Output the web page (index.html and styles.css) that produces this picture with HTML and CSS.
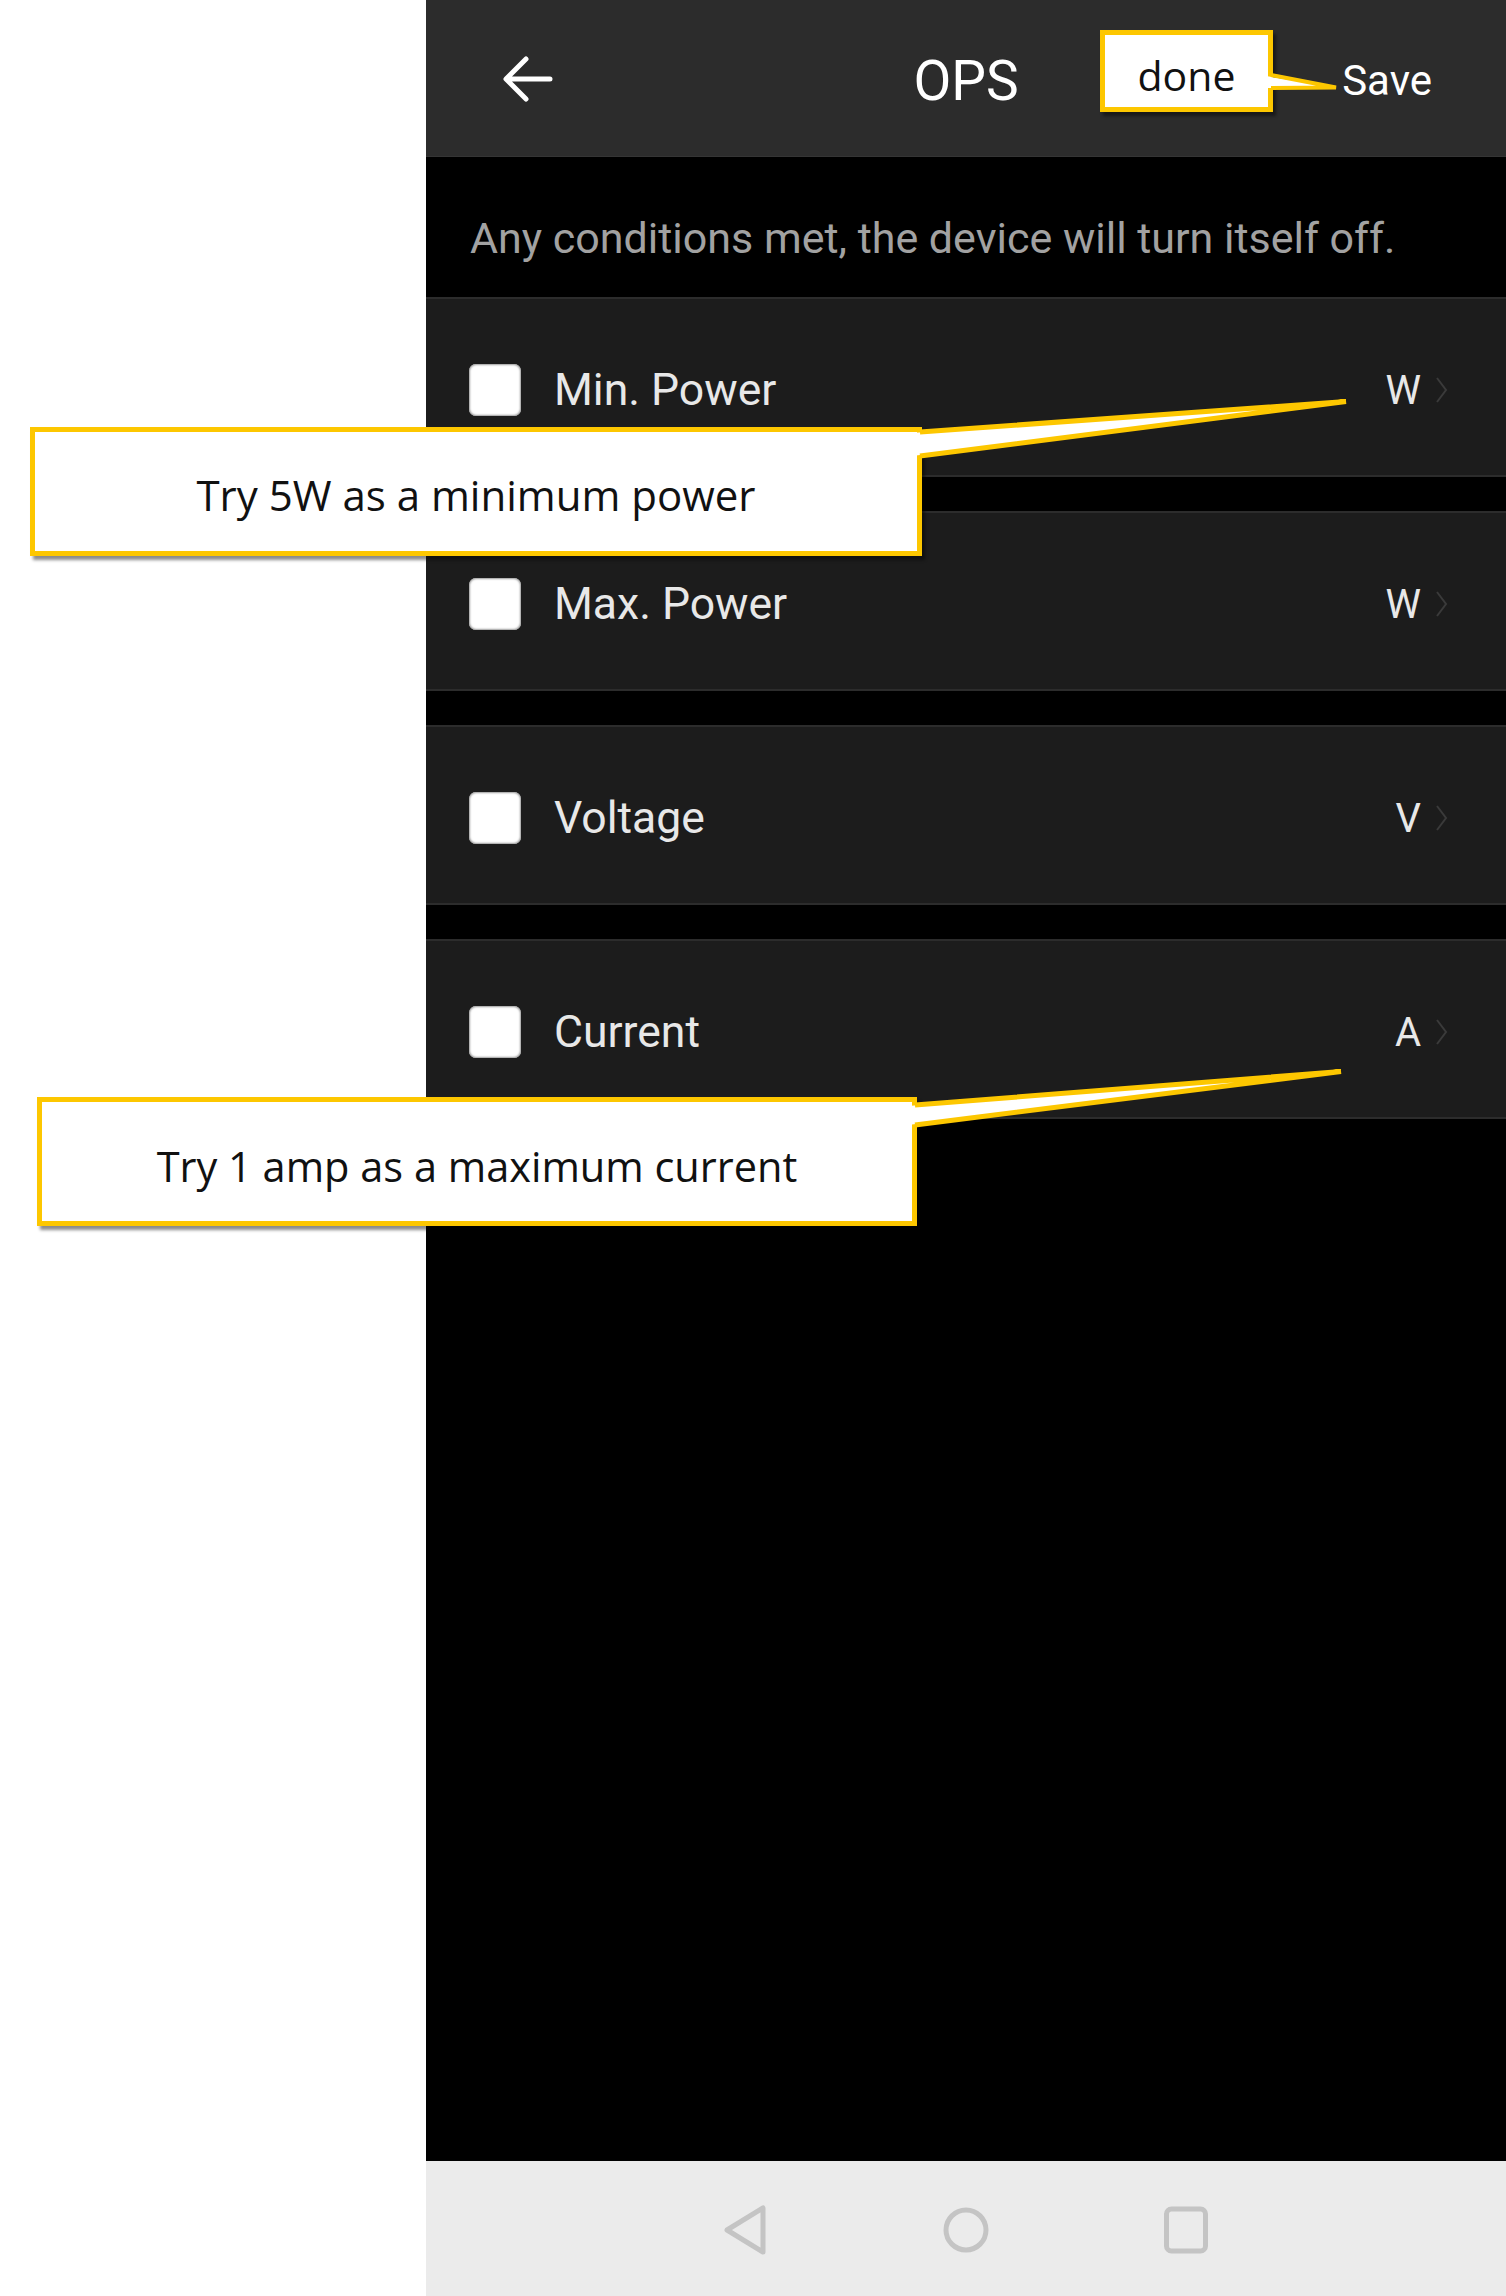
FILE: index.html
```html
<!DOCTYPE html>
<html>
<head>
<meta charset="utf-8">
<title>OPS</title>
<link rel="stylesheet" href="styles.css">
</head>
<body>
<div class="page">
  <div class="blank"></div>
  <div class="phone">
    <header class="appbar">
      <div class="back">
        <svg width="52" height="48" viewBox="0 0 52 48"><path d="M49 24 H6 M25 4 L5 24 L25 44" fill="none" stroke="#fff" stroke-width="5" stroke-linecap="round" stroke-linejoin="round"/></svg>
      </div>
      <div class="title">OPS</div>
      <div class="save">Save</div>
    </header>
    <div class="desc">Any conditions met, the device will turn itself off.</div>
    <div class="list">
      <div class="row">
        <span class="check"></span>
        <span class="label">Min. Power</span>
        <span class="unit">W</span>
        <svg class="chev" width="14" height="28" viewBox="0 0 14 28"><path d="M2 2 L11 14 L2 26" fill="none" stroke="#3a3a3a" stroke-width="2"/></svg>
      </div>
      <div class="row">
        <span class="check"></span>
        <span class="label">Max. Power</span>
        <span class="unit">W</span>
        <svg class="chev" width="14" height="28" viewBox="0 0 14 28"><path d="M2 2 L11 14 L2 26" fill="none" stroke="#3a3a3a" stroke-width="2"/></svg>
      </div>
      <div class="row">
        <span class="check"></span>
        <span class="label">Voltage</span>
        <span class="unit">V</span>
        <svg class="chev" width="14" height="28" viewBox="0 0 14 28"><path d="M2 2 L11 14 L2 26" fill="none" stroke="#3a3a3a" stroke-width="2"/></svg>
      </div>
      <div class="row">
        <span class="check"></span>
        <span class="label">Current</span>
        <span class="unit">A</span>
        <svg class="chev" width="14" height="28" viewBox="0 0 14 28"><path d="M2 2 L11 14 L2 26" fill="none" stroke="#3a3a3a" stroke-width="2"/></svg>
      </div>
    </div>
    <div class="filler"></div>
    <nav class="navbar">
      <svg width="46" height="50" viewBox="0 0 46 50"><path d="M40 3 L40 47 L4 25 Z" fill="none" stroke="#c4c4c4" stroke-width="5" stroke-linejoin="round"/></svg>
      <svg width="50" height="50" viewBox="0 0 50 50"><circle cx="25" cy="25" r="20" fill="none" stroke="#c4c4c4" stroke-width="5"/></svg>
      <svg width="46" height="50" viewBox="0 0 46 50"><rect x="3.5" y="4" width="39" height="42" rx="5" fill="none" stroke="#c4c4c4" stroke-width="5"/></svg>
    </nav>
  </div>
</div>

<div class="callout c-done">done</div>
<div class="callout c-min">Try 5W as a minimum power</div>
<div class="callout c-cur">Try 1 amp as a maximum current</div>

<svg class="pointers" width="1506" height="2296" viewBox="0 0 1506 2296">
  <polygon points="1266,76 1335,87 1266,88" fill="#fff"/>
  <polyline points="1271,75 1336,87.5 1271,88" fill="none" stroke="#fdc700" stroke-width="4"/>
  <polygon points="912,433 1344,401.5 912,456" fill="#fff"/>
  <polyline points="920,432 1346,401.5 920,456" fill="none" stroke="#fdc700" stroke-width="5"/>
  <polygon points="908,1106 1339,1071.5 908,1125" fill="#fff"/>
  <polyline points="915,1105 1341,1071.5 915,1125" fill="none" stroke="#fdc700" stroke-width="5"/>
</svg>
</body>
</html>
```

FILE: styles.css
```css
html, body {
  margin: 0;
  padding: 0;
}
body {
  width: 1506px;
  height: 2296px;
  overflow: hidden;
  background: #ffffff;
  position: relative;
  font-family: Roboto, "Liberation Sans", sans-serif;
}
.page {
  display: flex;
  height: 2296px;
}
.blank {
  width: 426px;
  flex: none;
  background: #ffffff;
}
.phone {
  width: 1080px;
  display: flex;
  flex-direction: column;
  background: #000;
}
.appbar {
  height: 157px;
  flex: none;
  background: #2c2c2c;
  display: grid;
  grid-template-columns: 1fr auto 1fr;
  align-items: center;
  box-sizing: border-box;
  border-bottom: 1px solid #353535;
}
.back {
  padding-left: 75px;
  display: flex;
  align-items: center;
  padding-top: 2px;
}
.title {
  color: #ffffff;
  font-size: 55px;
  padding-top: 6px;
}
.save {
  justify-self: end;
  padding-right: 74px;
  color: #ffffff;
  font-size: 42px;
  padding-top: 4px;
}
.desc {
  height: 140px;
  flex: none;
  box-sizing: border-box;
  padding: 57px 0 0 44px;
  color: #a2a2a2;
  font-size: 43px;
  line-height: 48px;
}
.list {
  display: flex;
  flex-direction: column;
  gap: 34px;
  flex: none;
}
.row {
  height: 180px;
  box-sizing: border-box;
  background: #1c1c1c;
  border-top: 2px solid #2c2c2c;
  border-bottom: 2px solid #2c2c2c;
  display: flex;
  align-items: center;
  padding: 6px 57px 0 43px;
}
.check {
  width: 52px;
  height: 52px;
  border-radius: 7px;
  background: #ffffff;
  box-shadow: inset 0 0 2px 1px #9a9a9a;
  flex: none;
}
.label {
  margin-left: 33px;
  color: #e8e8e8;
  font-size: 44.5px;
}
.unit {
  margin-left: auto;
  color: #e8e8e8;
  font-size: 40px;
}
.chev {
  margin-left: 14px;
  flex: none;
}
.filler {
  flex: 1;
  background: #000;
}
.navbar {
  height: 135px;
  flex: none;
  background: #ebebeb;
  display: flex;
  align-items: center;
  justify-content: center;
  gap: 172px;
  padding-top: 2px;
  box-sizing: border-box;
}
.navbar svg {
  display: block;
}
.callout {
  position: absolute;
  box-sizing: border-box;
  background: #ffffff;
  border: 5px solid #fdc700;
  box-shadow: 3px 4px 3px rgba(0, 0, 0, 0.45);
  display: flex;
  align-items: center;
  justify-content: center;
  color: #111;
  font-family: "Open Sans", Lato, sans-serif;
}
.c-done {
  left: 1100px;
  top: 30px;
  width: 173px;
  height: 82px;
  font-size: 41px;
  padding-top: 8px;
}
.c-min {
  left: 30px;
  top: 427px;
  width: 892px;
  height: 129px;
  font-size: 42px;
  padding-top: 6px;
}
.c-cur {
  left: 37px;
  top: 1097px;
  width: 880px;
  height: 129px;
  font-size: 41.5px;
  padding-top: 8px;
}
.pointers {
  position: absolute;
  left: 0;
  top: 0;
  pointer-events: none;
}
```
